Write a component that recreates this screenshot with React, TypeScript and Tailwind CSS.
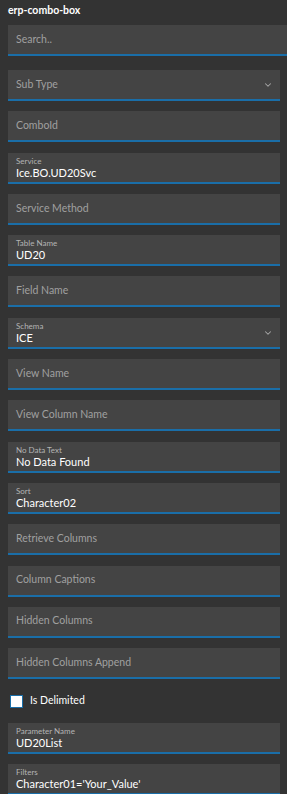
import { ChevronDown } from 'lucide-react';

type Field = { label: string; value?: string; select?: boolean };

const FIELDS_TOP: Field[] = [
  { label: 'Sub Type', select: true },
  { label: 'ComboId' },
  { label: 'Service', value: 'Ice.BO.UD20Svc' },
  { label: 'Service Method' },
  { label: 'Table Name', value: 'UD20' },
  { label: 'Field Name' },
  { label: 'Schema', value: 'ICE', select: true },
  { label: 'View Name' },
  { label: 'View Column Name' },
  { label: 'No Data Text', value: 'No Data Found' },
  { label: 'Sort', value: 'Character02' },
  { label: 'Retrieve Columns' },
  { label: 'Column Captions' },
  { label: 'Hidden Columns' },
  { label: 'Hidden Columns Append' },
];

const FIELDS_BOTTOM: Field[] = [
  { label: 'Parameter Name', value: 'UD20List' },
  { label: 'Filters', value: "Character01='Your_Value'" },
];

function InputField({ label, value, select }: Field) {
  return (
    <div className="relative h-[31px] w-[272px] shrink-0 bg-[#444444] border-b-2 border-[#1a6ea8]">
      {value ? (
        <div className="flex flex-col pl-2 pt-[3px]">
          <span className="text-[8px] leading-[10px] text-[#b4b4b4]">{label}</span>
          <span className="text-[11px] leading-[14px] text-white">{value}</span>
        </div>
      ) : (
        <div className="flex h-full items-center pl-2 text-[10.5px] text-[#a0a0a0]">{label}</div>
      )}
      {select && (
        <ChevronDown
          className="absolute right-[7px] top-[10px] h-[10px] w-[10px] text-[#a8a8a8]"
          strokeWidth={2.5}
        />
      )}
    </div>
  );
}

export default function App() {
  return (
    <div
      className="h-[794px] w-[287px] overflow-hidden bg-[#333333] pl-2"
      style={{ fontFamily: 'Lato, "Noto Sans", sans-serif' }}
    >
      <div className="pt-[3px] text-[10.5px] leading-[14px] font-bold text-white">
        erp-combo-box
      </div>
      <div className="mt-[8px] flex h-[31px] w-[279px] items-center bg-[#444444] border-b-2 border-[#1a6ea8] pl-2 text-[10.5px] text-[#a0a0a0]">
        Search..
      </div>
      <div className="mt-[14px] flex flex-col gap-[10.3px]">
        {FIELDS_TOP.map((f) => (
          <InputField key={f.label} {...f} />
        ))}
      </div>
      <label className="mt-[14px] flex items-center gap-[7px] pl-[2px]">
        <span className="h-[13px] w-[13px] border border-[#1a6ea8] bg-white" />
        <span className="text-[10.5px] text-white">Is Delimited</span>
      </label>
      <div className="mt-[14px] flex flex-col gap-[10px]">
        {FIELDS_BOTTOM.map((f) => (
          <InputField key={f.label} {...f} />
        ))}
      </div>
    </div>
  );
}
